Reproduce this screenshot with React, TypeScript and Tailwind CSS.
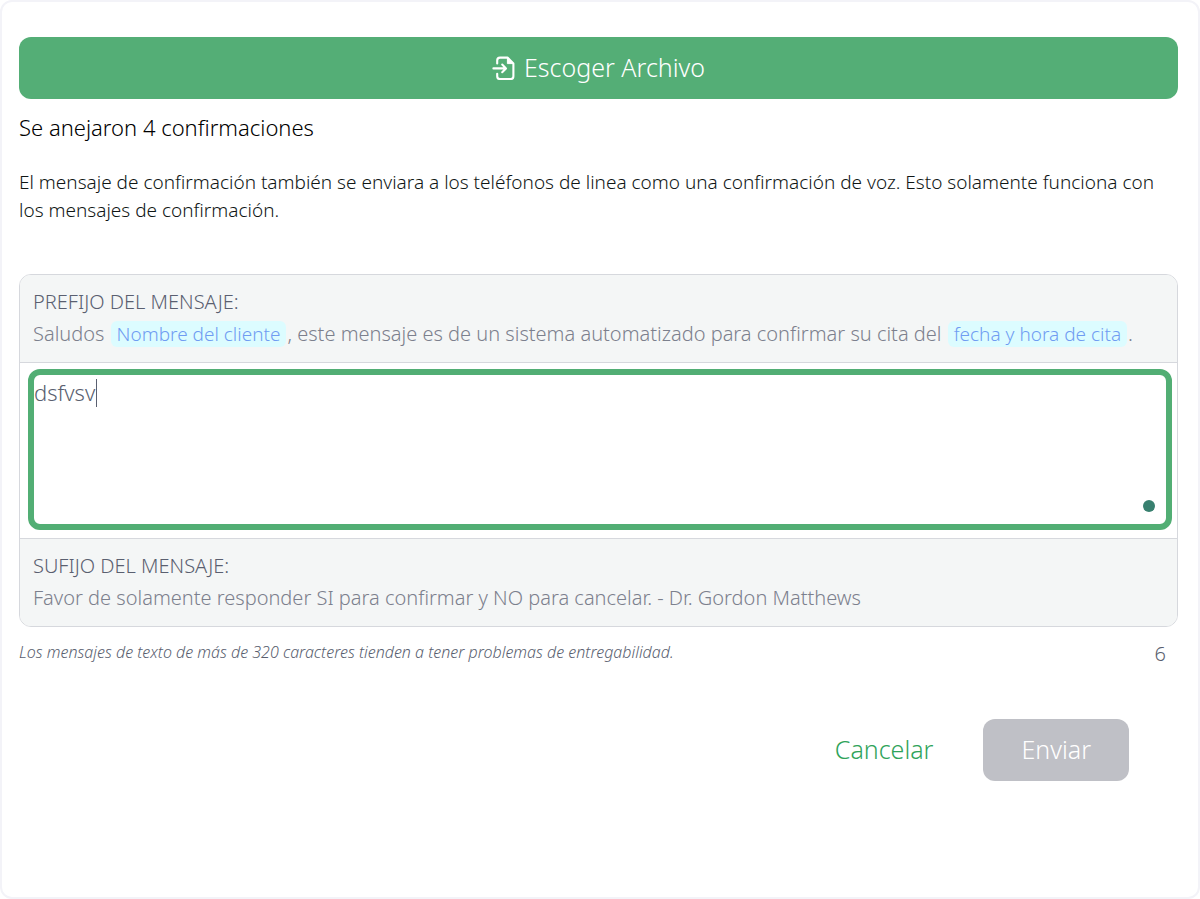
import { useState } from "react";

function FileImportIcon() {
  return (
    <svg
      className="h-6 w-6 shrink-0"
      viewBox="0 0 24 24"
      fill="none"
      stroke="currentColor"
      strokeWidth="2.1"
      strokeLinecap="round"
      strokeLinejoin="round"
      aria-hidden="true"
    >
      <path d="M5.200 7.500V4.400A2.800 2.800 0 0 1 8 1.600H15.500L21.400 7.500V20.200A2.800 2.800 0 0 1 18.600 23H8A2.800 2.800 0 0 1 5.200 20.200V17.800" />
      <path d="M15.400 2.400v5.200H20.600Z" fill="currentColor" strokeWidth="1" />
      <path d="M1.400 12.400H13.800M10.200 8.600l3.800 3.800-3.800 3.800" />
    </svg>
  );
}

function Token({ children }: { children: string }) {
  return (
    <span className="mx-px rounded-md bg-[#dcfcff] px-1.5 text-[19px] text-[#709cf2]">
      {children}
    </span>
  );
}

export default function App() {
  const [message, setMessage] = useState("dsfvsv");

  return (
    <main className="flex min-h-screen flex-col rounded-xl border-2 border-[#f3f3f8] bg-white pt-[35px] pr-5 pb-8 pl-[17px] font-['Noto_Sans',sans-serif] font-light">
      <button
        type="button"
        className="flex h-[62px] items-center justify-center gap-2 rounded-xl bg-[#54ae76] text-[25px] text-white"
      >
        <FileImportIcon />
        Escoger Archivo
      </button>

      <h1 className="mt-3 text-[22px] leading-8 font-light text-black">
        Se anejaron 4 confirmaciones
      </h1>
      <p className="mt-[25px] text-[19px] leading-7 text-[#101615]">
        El mensaje de confirmación también se enviara a los teléfonos de linea como una
        confirmación de voz. Esto solamente funciona con los mensajes de confirmación.
      </p>

      <section className="mt-[50px] overflow-hidden rounded-xl border border-[#d6d8dd]">
        <div className="border-b border-[#d6d8dd] bg-[#f4f6f6] px-[13px] pt-[11px] pb-3 text-xl leading-8">
          <label htmlFor="message" className="block text-[#5a5f70]">
            PREFIJO DEL MENSAJE:
          </label>
          <p className="text-[#7c808d]">
            Saludos <Token>Nombre del cliente</Token>, este mensaje es de un sistema automatizado
            para confirmar su cita del <Token>fecha y hora de cita</Token>.
          </p>
        </div>
        <div className="relative pt-1.5 pr-[5px] pb-2 pl-2">
          <textarea
            id="message"
            autoFocus
            value={message}
            onChange={(event) => setMessage(event.target.value)}
            className="block h-[161px] w-full resize-none rounded-xl border-6 border-[#52ae74] text-[22px] leading-[34px] text-[#5a5f70] caret-transparent outline-none"
          />
          <span className="absolute top-4 left-[76px] h-7 w-px bg-[#5a5f70]" />
          <span className="absolute right-[22px] bottom-[26px] h-3 w-3 rounded-full bg-[#38806f]" />
        </div>
        <div className="border-t border-[#d6d8dd] bg-[#f4f6f6] px-[13px] pt-[11px] pb-3 text-xl leading-8">
          <p className="text-[#5a5f70]">SUFIJO DEL MENSAJE:</p>
          <p className="text-[#7c808d]">
            Favor de solamente responder SI para confirmar y NO para cancelar. - Dr. Gordon
            Matthews
          </p>
        </div>
      </section>

      <div className="mt-[11px] flex justify-between pr-3 text-[#5a5f70]">
        <p className="text-base leading-7 italic">
          Los mensajes de texto de más de 320 caracteres tienden a tener problemas de
          entregabilidad.
        </p>
        <output htmlFor="message" className="text-xl leading-8">
          {message.length}
        </output>
      </div>

      <div className="mt-[49px] flex justify-end gap-[50px] pr-[49px] text-[25px]">
        <button type="button" className="text-[#2fa35a]">
          Cancelar
        </button>
        <button type="button" className="h-[62px] rounded-xl bg-[#bfc0c6] px-[38px] text-white">
          Enviar
        </button>
      </div>
    </main>
  );
}
